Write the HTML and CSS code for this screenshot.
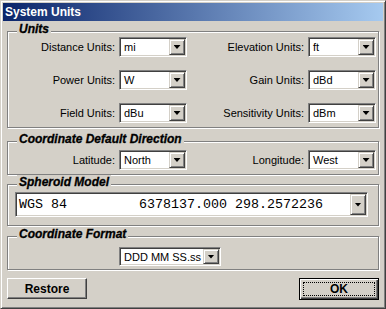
FILE: index.html
```html
<!DOCTYPE html>
<html lang="en">
<head>
    <meta charset="UTF-8">
    <title>System Units</title>
    <link rel="stylesheet" href="styles.css">
</head>
<body>
    <div class="window">
        <div class="titlebar">System Units</div>

        <div class="content">
            <div class="group">
                <div class="group-title">Units</div>
                <div class="grid units">
                    <label>Distance Units:</label>
                    <div class="combo"><span class="value">mi</span><span class="drop"><i></i></span></div>
                    <label>Elevation Units:</label>
                    <div class="combo"><span class="value">ft</span><span class="drop"><i></i></span></div>

                    <label>Power Units:</label>
                    <div class="combo"><span class="value">W</span><span class="drop"><i></i></span></div>
                    <label>Gain Units:</label>
                    <div class="combo"><span class="value">dBd</span><span class="drop"><i></i></span></div>

                    <label>Field Units:</label>
                    <div class="combo"><span class="value">dBu</span><span class="drop"><i></i></span></div>
                    <label>Sensitivity Units:</label>
                    <div class="combo"><span class="value">dBm</span><span class="drop"><i></i></span></div>
                </div>
            </div>

            <div class="group direction">
                <div class="group-title">Coordinate Default Direction</div>
                <div class="grid">
                    <label>Latitude:</label>
                    <div class="combo"><span class="value">North</span><span class="drop"><i></i></span></div>
                    <label>Longitude:</label>
                    <div class="combo"><span class="value">West</span><span class="drop"><i></i></span></div>
                </div>
            </div>

            <div class="group spheroid">
                <div class="group-title">Spheroid Model</div>
                <div class="combo wide"><span class="value mono">WGS 84         6378137.000 298.2572236</span><span class="drop"><i></i></span></div>
            </div>

            <div class="group format">
                <div class="group-title">Coordinate Format</div>
                <div class="combo medium"><span class="value">DDD MM SS.ss</span><span class="drop"><i></i></span></div>
            </div>

            <div class="buttons">
                <button class="btn">Restore</button>
                <button class="btn default"><span>OK</span></button>
            </div>
        </div>
    </div>
</body>
</html>
```

FILE: styles.css
```css
body {
    margin: 0;
    background-color: #d4d0c8;
    font-family: "Liberation Sans", Arial, sans-serif;
    color: #000;
}
.window {
    width: 386px;
    height: 309px;
    box-sizing: border-box;
    padding: 2px;
    background-color: #d4d0c8;
    border: 1px solid;
    border-color: #d4d0c8 #404040 #404040 #d4d0c8;
    box-shadow: inset 1px 1px #fff, inset -1px -1px #808080;
}
.titlebar {
    height: 18px;
    line-height: 18px;
    padding-left: 2px;
    background: linear-gradient(to right, #0a246a, #a6caf0);
    color: #fff;
    font-weight: bold;
    font-size: 12px;
}
.content {
    padding: 10px 4px 0 4px;
}
.group {
    border: 1px solid #808080;
    box-shadow: inset 1px 1px #fff, 1px 1px #fff;
}
.group-title {
    width: max-content;
    margin: -10px 0 -4px 9px;
    padding: 0 2px;
    height: 14px;
    line-height: 14px;
    background-color: #d4d0c8;
    font-size: 12px;
    font-weight: bold;
    font-style: italic;
    -webkit-text-stroke: 0.3px #000;
}
.grid {
    display: grid;
    grid-template-columns: 111px 68px 1fr 68px;
    row-gap: 13px;
    align-items: center;
    padding-right: 2px;
}
.grid label {
    text-align: right;
    padding-right: 4px;
    font-size: 11px;
}
.units {
    padding-top: 5px;
    padding-bottom: 4px;
}
.direction {
    margin-top: 13px;
}
.direction .grid {
    padding-top: 8px;
    padding-bottom: 4px;
}
.spheroid {
    margin-top: 9px;
}
.format {
    margin-top: 10px;
}
.combo {
    display: flex;
    height: 20px;
    box-sizing: border-box;
    padding: 1px;
    background-color: #fff;
    border: 1px solid;
    border-color: #808080 #fff #fff #808080;
    box-shadow: inset 1px 1px #404040, inset -1px -1px #d4d0c8;
}
.combo.wide {
    width: 353px;
    height: 25px;
    margin: 7px 0 8px 7px;
}
.combo.medium {
    width: 102px;
    height: 19px;
    margin: 10px 0 3px 111px;
}
.value {
    flex: 1;
    padding-left: 3px;
    font-size: 11px;
    display: flex;
    align-items: center;
    white-space: pre;
    overflow: hidden;
}
.value.mono {
    font-family: "Liberation Mono", "Courier New", monospace;
    font-size: 13.33px;
    padding-left: 2px;
}
.drop {
    width: 16px;
    box-sizing: border-box;
    display: flex;
    align-items: center;
    justify-content: center;
    background-color: #d4d0c8;
    border: 1px solid;
    border-color: #d4d0c8 #404040 #404040 #d4d0c8;
    box-shadow: inset 1px 1px #fff, inset -1px -1px #808080;
}
.drop i {
    width: 7px;
    height: 4px;
    background-color: #000;
    clip-path: polygon(0 0, 100% 0, 50% 100%);
}
.buttons {
    display: flex;
    justify-content: space-between;
    margin-top: 8px;
}
.btn {
    width: 80px;
    height: 21px;
    margin: 0;
    padding: 0;
    font-family: "Liberation Sans", Arial, sans-serif;
    font-size: 12px;
    font-weight: bold;
    color: #000;
    background-color: #d4d0c8;
    border: 1px solid;
    border-color: #fff #404040 #404040 #fff;
    box-shadow: inset -1px -1px #808080;
}
.btn.default {
    height: 22px;
    padding: 3px;
    border: 1px solid #000;
    box-shadow: inset 1px 1px #fff, inset -1px -1px #404040, inset -2px -2px #808080;
}
.btn.default span {
    display: flex;
    align-items: center;
    justify-content: center;
    height: 100%;
    box-sizing: border-box;
    border: 1px dotted #000;
}
```
